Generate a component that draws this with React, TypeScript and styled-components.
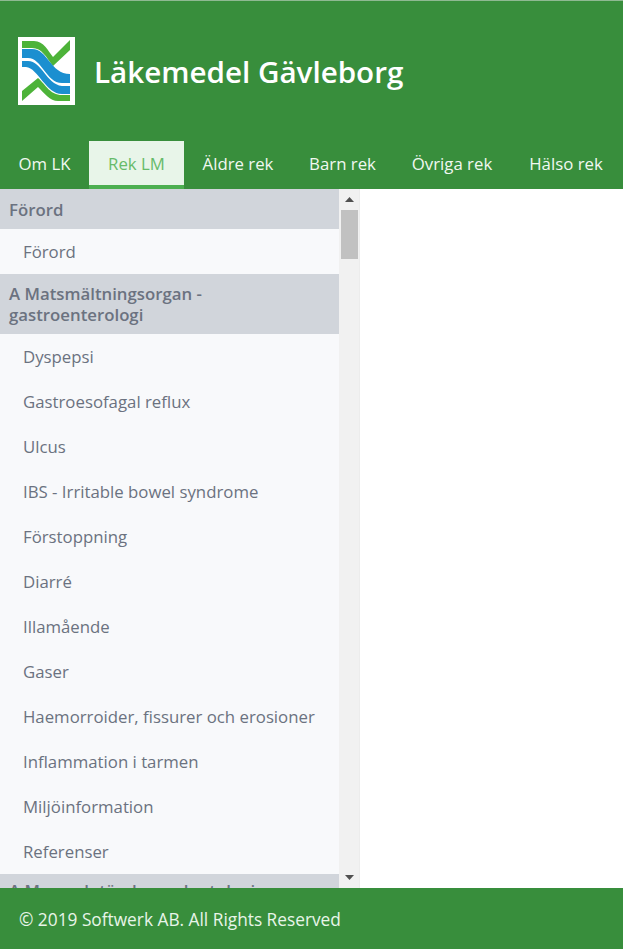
import styled, { createGlobalStyle } from "styled-components";

const GlobalStyle = createGlobalStyle`
  html, body {
    margin: 0;
    padding: 0;
    height: 100%;
    overflow: hidden;
    background: #fff;
  }
  * {
    box-sizing: border-box;
  }
`;

const Page = styled.div`
  display: flex;
  flex-direction: column;
  height: 100vh;
  font-family: "Open Sans", "Noto Sans", sans-serif;
`;

const Header = styled.header`
  flex: none;
  height: 141px;
  padding: 36px 18px 0;
  display: flex;
  align-items: flex-start;
  gap: 19px;
  background: #388e3c;
  border-top: 1px solid #8fb992;
`;

const Logo = styled.svg`
  display: block;
  width: 57px;
  height: 68px;
`;

const Title = styled.h1`
  margin: 14px 0 0;
  font-size: 29.6px;
  line-height: 42px;
  font-weight: 600;
  color: #fff;
`;

const Nav = styled.nav`
  flex: none;
  height: 48px;
  display: flex;
  background: #388e3c;
`;

const Tab = styled.a<{ $active?: boolean; $width: number }>`
  width: ${({ $width }) => $width}px;
  display: flex;
  justify-content: center;
  align-items: center;
  font-size: 16.8px;
  color: ${({ $active }) => ($active ? "#66bb6a" : "#f1f8f1")};
  background: ${({ $active }) => ($active ? "#e8f5e9" : "transparent")};
  border-bottom: 4px solid ${({ $active }) => ($active ? "#4caf50" : "transparent")};
`;

const Main = styled.main`
  flex: 1;
  min-height: 0;
  display: flex;
`;

const Sidebar = styled.div`
  flex: none;
  width: 339px;
  overflow: hidden;
  background: #f8f9fb;
`;

const GroupTitle = styled.div<{ $raised?: boolean }>`
  min-height: 40px;
  padding: ${({ $raised }) => ($raised ? "5px 9px 13px" : "9px")};
  display: flex;
  align-items: center;
  font-size: 16.8px;
  line-height: 21px;
  font-weight: 600;
  color: #6b7280;
  background: #d1d5db;
`;

const Item = styled.div`
  height: 45px;
  padding: 11px 23px 0;
  font-size: 16.8px;
  line-height: 23px;
  white-space: nowrap;
  color: #6b7280;
`;

const ScrollTrack = styled.div`
  flex: none;
  width: 21px;
  display: flex;
  flex-direction: column;
  align-items: center;
  padding-left: 1px;
  background: #f1f1f1;
  border-right: 1px solid #ececec;
`;

const Arrow = styled.svg`
  flex: none;
  width: 19px;
  height: 21px;
  fill: #505050;
`;

const ScrollThumb = styled.div`
  flex: none;
  width: 17px;
  height: 49px;
  background: #c1c1c1;
`;

const ScrollSpace = styled.div`
  flex: 1;
`;

const Footer = styled.footer`
  flex: none;
  height: 61px;
  padding: 2px 19px 0;
  display: flex;
  align-items: center;
  font-size: 17.3px;
  color: #e8f5e9;
  background: #388e3c;
`;

const tabs = [
  { label: "Om LK", width: 89 },
  { label: "Rek LM", width: 95, active: true },
  { label: "Äldre rek", width: 108 },
  { label: "Barn rek", width: 101 },
  { label: "Övriga rek", width: 118 },
  { label: "Hälso rek", width: 110 },
];

const sections = [
  { title: "Förord", items: ["Förord"] },
  {
    title: "A Matsmältningsorgan - gastroenterologi",
    items: [
      "Dyspepsi",
      "Gastroesofagal reflux",
      "Ulcus",
      "IBS - Irritable bowel syndrome",
      "Förstoppning",
      "Diarré",
      "Illamående",
      "Gaser",
      "Haemorroider, fissurer och erosioner",
      "Inflammation i tarmen",
      "Miljöinformation",
      "Referenser",
    ],
  },
  { title: "A Mun och tänder - odontologi", items: [], raised: true },
];

function LogoMark() {
  return (
    <Logo viewBox="0 0 57 68">
      <rect width="57" height="68" fill="#fff" />
      <g fill="#4db339">
        <path d="M4 4 H16 C26 4 30 14 35 20 L52 3 V13 L35 29 C28 20 24 11 14 11 H4 Z" />
        <path d="M4 54 L20 41 C28 48 32 58 44 58 H52 V64 H40 C32 64 26 56 20 50 L4 64 Z" />
      </g>
      <g fill="#1b8fd0">
        <path d="M4 12 H14 C30 12 32 37 52 37 V46 H44 C28 46 24 21 10 21 H4 Z" />
        <path d="M4 24 H10 C24 24 28 47 44 49 H52 V57 H44 C28 57 20 31 8 30 H4 Z" />
      </g>
    </Logo>
  );
}

export default function App() {
  return (
    <Page>
      <GlobalStyle />
      <Header>
        <LogoMark />
        <Title>Läkemedel Gävleborg</Title>
      </Header>
      <Nav>
        {tabs.map((tab) => (
          <Tab key={tab.label} $active={tab.active} $width={tab.width}>
            {tab.label}
          </Tab>
        ))}
      </Nav>
      <Main>
        <Sidebar>
          {sections.map((section) => (
            <div key={section.title}>
              <GroupTitle $raised={section.raised}>{section.title}</GroupTitle>
              {section.items.map((item, index) => (
                <Item key={index}>{item}</Item>
              ))}
            </div>
          ))}
        </Sidebar>
        <ScrollTrack>
          <Arrow viewBox="0 0 19 21">
            <path d="M5 13 L9.5 8 L14 13 Z" />
          </Arrow>
          <ScrollThumb />
          <ScrollSpace />
          <Arrow viewBox="0 0 19 21">
            <path d="M5 8 L14 8 L9.5 13 Z" />
          </Arrow>
        </ScrollTrack>
      </Main>
      <Footer>© 2019 Softwerk AB. All Rights Reserved</Footer>
    </Page>
  );
}
